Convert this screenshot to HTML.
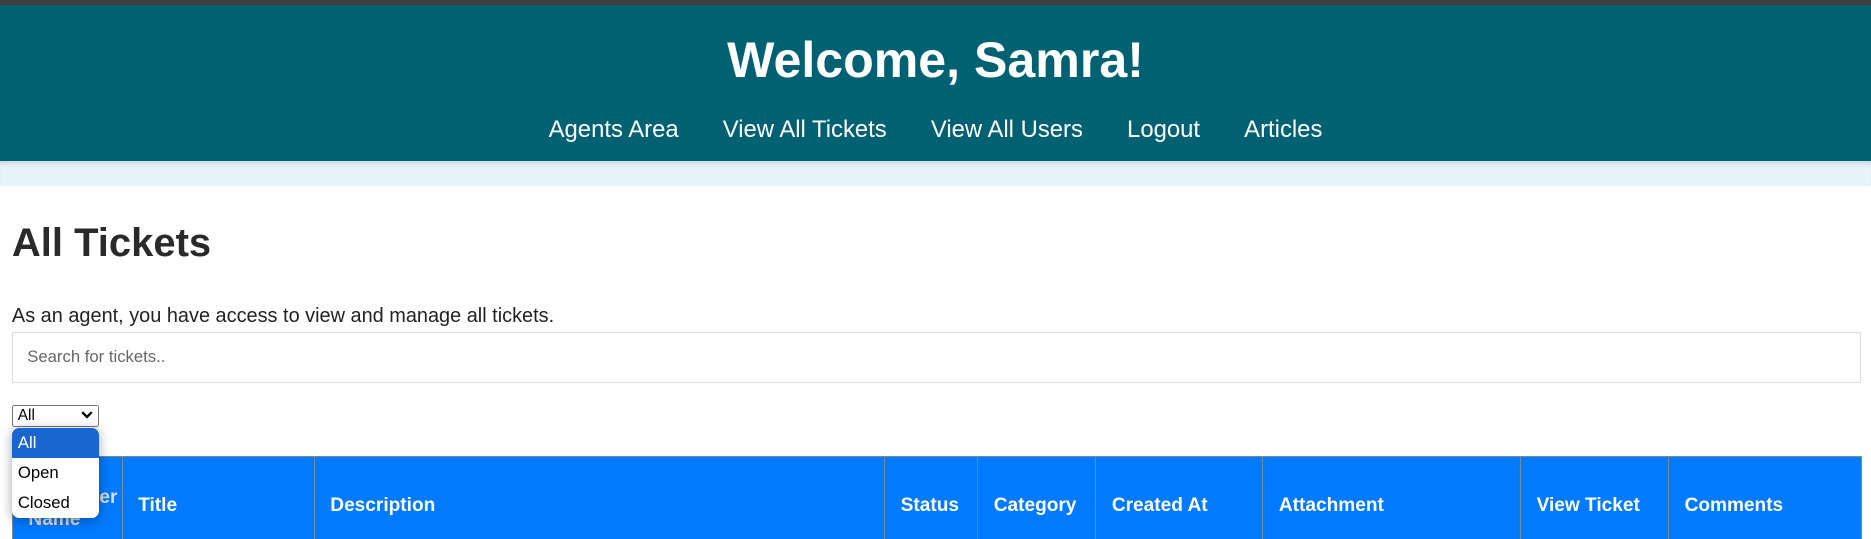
<!DOCTYPE html>
<html><head><meta charset="utf-8"><style>
html,body{margin:0;padding:0;overflow:hidden;background:#fff}
body{zoom:1.19324;width:1568px;height:452px;position:relative;font-family:"Liberation Sans",Arial,sans-serif;color:#333}
.top{position:absolute;left:0;top:0;width:1568px;height:4px;background:#3f3f3f}
.hdr{position:absolute;left:0;top:4px;width:1568px;height:131px;background:#006172;color:#fff;text-align:center}
.hdr h1{margin:0;position:absolute;top:22px;width:100%;font-size:42px;font-weight:bold}
.nav{position:absolute;top:93px;width:100%;font-size:20px}
.nav span{margin:0 18.5px}
.band{position:absolute;top:135px;left:0;width:1568px;height:21px;background:#e6f3f8;box-shadow:inset 0 4px 4px -2px rgba(0,0,0,.12)}
h2{position:absolute;left:10px;top:185px;margin:0;font-size:33.5px;font-weight:bold;color:#2a2a2a}
p{position:absolute;left:10px;top:256px;margin:0;font-size:16.7px;color:#222}
.search{position:absolute;left:10px;top:278px;width:1550px;height:43px;border:1px solid #ddd;box-sizing:border-box;font-size:14px;color:#666;padding:12px 12px}
.sel{position:absolute;left:10px;top:339px;width:73px;height:19px;border:1px solid #767676;box-sizing:border-box;border-radius:2px;font-size:13px;color:#000;padding:1px 4px}
.sel svg{position:absolute;right:4px;top:5px}
.dd{position:absolute;left:10px;top:359px;width:73px;height:75px;background:#fff;border-radius:6px;box-shadow:0 2px 10px rgba(0,0,0,.35);overflow:hidden;z-index:5;font-size:14px;color:#000}
.dd div{height:25px;line-height:25px;padding-left:5px}
.dd .a{background:#1a66d0;color:#fff}
table{position:absolute;left:10px;top:382px;width:1550px;table-layout:fixed;border-collapse:collapse;background:#007bff;color:#fff;font-size:16px;font-weight:bold}
td{border:1px solid #7a8a99;border-bottom:none;height:80px;vertical-align:top;padding:0 13px;box-sizing:border-box;overflow:hidden}
td span{display:block;margin-top:32px}
</style></head><body>
<div class="top"></div>
<div class="hdr"><h1>Welcome, Samra!</h1><div class="nav"><span>Agents Area</span><span>View All Tickets</span><span>View All Users</span><span>Logout</span><span>Articles</span></div></div>
<div class="band"></div>
<h2>All Tickets</h2>
<p>As an agent, you have access to view and manage all tickets.</p>
<div class="search">Search for tickets..</div>
<div class="sel">All<svg width="10" height="7" viewBox="0 0 10 7"><path d="M1 1l4 4 4-4" stroke="#000" stroke-width="2" fill="none"/></svg></div>
<div class="dd"><div class="a">All</div><div>Open</div><div>Closed</div></div>
<table><colgroup><col style="width:92px"><col style="width:161px"><col style="width:478px"><col style="width:78px"><col style="width:99px"><col style="width:140px"><col style="width:216px"><col style="width:124px"><col style="width:162px"></colgroup><tr>
<td><span style="margin-top:25px;color:#ddd">Customer Name</span></td>
<td><span>Title</span></td>
<td><span>Description</span></td>
<td><span>Status</span></td>
<td><span>Category</span></td>
<td><span>Created At</span></td>
<td><span>Attachment</span></td>
<td><span>View Ticket</span></td>
<td><span>Comments</span></td>
</tr></table>
</body></html>
